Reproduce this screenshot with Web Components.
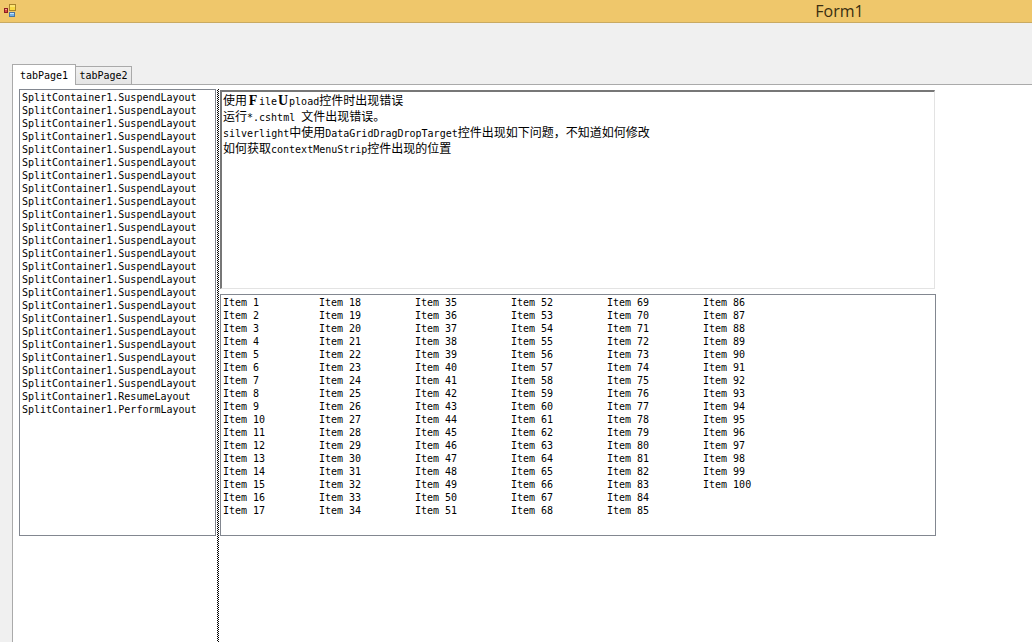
<!DOCTYPE html>
<html lang="zh-CN">
<head>
<meta charset="utf-8">
<title>Form1</title>
<style>
  body { margin: 0; background: #f0f0f0; color: #000; font: 10px/13px "DejaVu Sans Mono", "Noto Sans CJK SC", monospace; }
</style>
</head>
<body>
<form-window></form-window>
<script>
const define = (name, html, setup) => {
  const template = document.createElement('template');
  template.innerHTML = html;
  customElements.define(name, class extends HTMLElement {
    constructor() {
      super();
      this.attachShadow({ mode: 'open' }).append(template.content.cloneNode(true));
    }
    connectedCallback() { if (setup) setup(this, this.shadowRoot); }
  });
};

define('title-bar', `
  <style>
    :host { display: flex; align-items: center; box-sizing: border-box; height: 23px; background: #efc76b; border-bottom: 1px solid #c9aa62; }
    svg { display: block; margin-left: 3px; width: 16px; height: 16px; }
    h1 { margin: 0 0 0 calc(79% - 19px); font: 16px/20px "Open Sans", "Noto Sans", sans-serif; color: #3a2e10; }
  </style>
  <svg viewBox="0 0 16 16" aria-hidden="true">
    <rect x="6.5" y="1.5" width="6" height="6" fill="#f7d843" stroke="#a8842c"/>
    <path d="M7 3h5" stroke="#fff3a0"/>
    <rect x="1.5" y="5.5" width="3" height="4" fill="#d94a42" stroke="#8d1f22"/>
    <path d="M2 6.5h2" stroke="#f5a092"/>
    <rect x="6.5" y="9.5" width="5" height="4" fill="#72b1e8" stroke="#4a739f"/>
    <path d="M7 10.5h4" stroke="#c3e2fa"/>
  </svg>
  <h1><slot></slot></h1>`);

define('tab-strip', `
  <style>
    :host { display: block; margin-left: 12px; }
    div { display: flex; align-items: flex-end; height: 21px; }
    button { box-sizing: border-box; font: inherit; color: inherit; border: 1px solid #aaa; padding: 0; background: linear-gradient(#f1f1f1, #e4e4e4); width: 56px; height: 18px; margin-bottom: 1px; border-bottom: 0; border-left: 0; }
    button[aria-selected="true"] { width: 64px; height: 21px; background: #fff; border-left: 1px solid #aaa; margin: 0; position: relative; z-index: 1; }
  </style>
  <div role="tablist">
    <button role="tab" aria-selected="true">tabPage1</button>
    <button role="tab" aria-selected="false">tabPage2</button>
  </div>`);

define('layout-log', `
  <style>
    :host { display: block; }
    select { display: block; box-sizing: border-box; width: 100%; height: 447px; margin: 0; padding: 2px 0 0; border: 1px solid #828790; border-radius: 0; background: #fff; color: #000; font: inherit; overflow: hidden; outline: 0; scrollbar-width: none; }
    option { padding: 0 2px; min-height: 13px; height: 13px; font: inherit; color: #000; }
  </style>
  <select size="34" aria-label="Layout log"></select>`,
  (host, root) => {
    const calls = [...Array(23).fill('SuspendLayout'), 'ResumeLayout', 'PerformLayout'];
    root.querySelector('select').replaceChildren(...calls.map(call => {
      const option = document.createElement('option');
      option.textContent = 'SplitContainer1.' + call;
      return option;
    }));
  });

define('split-bar', `
  <style>
    :host { display: block; background: repeating-conic-gradient(#000 0 25%, #fff 0 50%) 0 0 / 2px 2px; }
  </style>`);

define('rich-text', `
  <style>
    :host { display: block; }
    div { box-sizing: border-box; height: 199px; padding: 1px 0 0 1px; border: 1px solid #e3e3e3; border-top: 2px solid #777; border-left: 2px solid #777; background: #fff; outline: 0; }
    p { margin: 0; height: 16px; font-size: 12px; line-height: 16px; white-space: nowrap; }
    span { font-size: 10px; }
    b { display: inline-block; width: 12px; text-align: center; font: bold 14px/16px "Liberation Serif", serif; }
  </style>
  <div role="textbox" aria-multiline="true" aria-label="Notes" contenteditable="true" spellcheck="false"><p>使用<b>F</b><span>ile</span><b>U</b><span>pload</span>控件时出现错误</p><p>运行<span>*.cshtml </span>文件出现错误。</p><p><span>silverlight</span>中使用<span>DataGridDragDropTarget</span>控件出现如下问题，不知道如何修改</p><p>如何获取<span>contextMenuStrip</span>控件出现的位置</p></div>`);

define('item-list', `
  <style>
    :host { display: block; }
    ul { box-sizing: border-box; height: 242px; margin: 0; padding: 1px 2px; border: 1px solid #828790; background: #fff; list-style: none; display: grid; grid-auto-flow: column; grid-template-rows: repeat(17, 13px); grid-auto-columns: 96px; }
  </style>
  <ul></ul>`,
  (host, root) => {
    root.querySelector('ul').replaceChildren(...Array.from({ length: 100 }, (_, i) => {
      const item = document.createElement('li');
      item.textContent = 'Item ' + (i + 1);
      return item;
    }));
  });

define('split-container', `
  <style>
    :host { display: grid; grid-template-columns: 197px 2px minmax(0, 716px); column-gap: 1px; flex: 1; }
    .right { display: flex; flex-direction: column; gap: 5px; padding-top: 1px; }
    rich-text { margin-right: 1px; }
  </style>
  <layout-log></layout-log>
  <split-bar></split-bar>
  <div class="right"><rich-text></rich-text><item-list></item-list></div>`);

define('form-window', `
  <style>
    :host { display: flex; flex-direction: column; min-height: 100vh; }
    tab-strip { margin-top: 41px; }
    main { flex: 1; display: flex; margin: -1px 0 0 12px; padding: 4px 0 0 6px; border: 1px solid #aaa; border-width: 1px 0 0 1px; background: #fff; }
  </style>
  <title-bar>Form1</title-bar>
  <tab-strip></tab-strip>
  <main><split-container></split-container></main>`);
</script>
</body>
</html>
